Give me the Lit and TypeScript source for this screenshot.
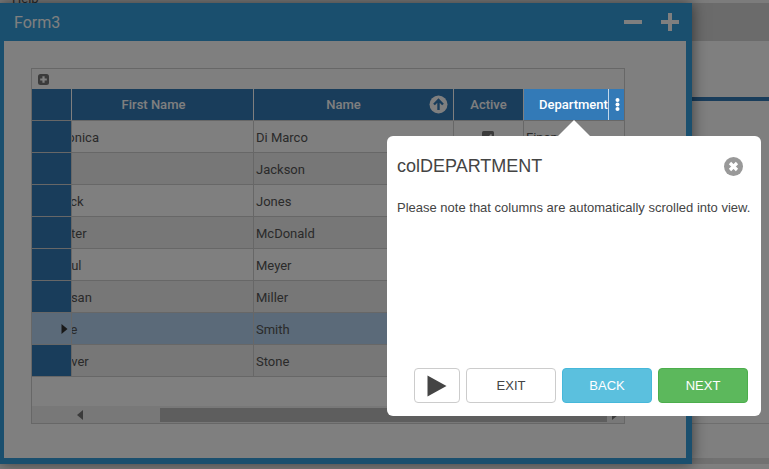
import {LitElement, html, css} from 'lit';
import {customElement} from 'lit/decorators.js';

interface IRow {
    first: string;
    name: string;
    department: string;
    selected?: boolean;
}

const ROWS: IRow[] = [
    {first: 'Monica', name: 'Di Marco', department: 'Finance'},
    {first: 'Al', name: 'Jackson', department: 'Sales'},
    {first: 'Jack', name: 'Jones', department: 'Sales'},
    {first: 'Peter', name: 'McDonald', department: 'Finance'},
    {first: 'Paul', name: 'Meyer', department: 'Support'},
    {first: 'Susan', name: 'Miller', department: 'Support'},
    {first: 'Joe', name: 'Smith', department: 'Sales', selected: true},
    {first: 'Oliver', name: 'Stone', department: 'Finance'},
];

@customElement('data-grid')
export class DataGrid extends LitElement {
    static override styles = css`
        :host {
            display: flex;
            flex-direction: column;
            width: 594px;
            height: 356px;
            box-sizing: border-box;
            border: 1px solid #cfcfcf;
            background: #fff;
            font-family: Roboto, "Liberation Sans", sans-serif;
            font-size: 13px;
            color: #555;
        }
        .toolbar {
            height: 20px;
            display: flex;
            align-items: center;
            padding-left: 6px;
            flex: none;
        }
        .row {
            display: grid;
            grid-template-columns: 39px 182px 200px 70px 101px;
            flex: none;
        }
        .head {
            height: 32px;
            background: #337ab7;
            color: #fff;
            font-weight: 500;
        }
        .head > div {
            display: flex;
            align-items: center;
            justify-content: center;
            box-sizing: border-box;
            border-left: 1px solid #fff;
            border-bottom: 1px solid #cfcfcf;
            height: 32px;
            position: relative;
        }
        .head > div:first-child {
            border-left: 0;
        }
        .head > .col-first {
            padding-right: 18px;
        }
        .head > .col-name {
            padding-right: 20px;
        }
        .sort {
            position: absolute;
            right: 5px;
            top: 6px;
        }
        .body-row {
            height: 32px;
        }
        .body-row:nth-child(even) {
            background: #eeeeee;
        }
        .body-row > div {
            box-sizing: border-box;
            height: 32px;
            line-height: 33px;
            border-left: 1px solid #cfcfcf;
            border-bottom: 1px solid #cfcfcf;
            padding-left: 2px;
            overflow: hidden;
            white-space: nowrap;
        }
        .body-row > .indicator {
            background: #337ab7;
            border-left: 0;
            padding: 0 3px 0 0;
            display: flex;
            align-items: center;
            justify-content: flex-end;
        }
        .body-row > .first {
            padding-left: 0;
            text-indent: -16px;
        }
        .body-row > .active {
            display: flex;
            justify-content: center;
            padding: 10px 1px 0 0;
        }
        .body-row.selected,
        .body-row.selected > .indicator {
            background: #b6d4f2;
        }
        .spacer {
            flex: 1;
        }
        .scroll {
            height: 17px;
            flex: none;
            background: #f1f1f1;
            display: flex;
            align-items: center;
            padding: 0 6px 0 45px;
        }
        .thumb {
            height: 14px;
            flex: 1;
            margin-left: 77px;
            margin-right: 5px;
            background: #bdbdbd;
        }
    `;

    override render() {
        return html`
            <div class="toolbar">
                <svg width="11" height="11" viewBox="0 0 11 11">
                    <rect width="11" height="11" rx="2.5" fill="#777"></rect>
                    <path d="M5.5 2.2v6.6M2.2 5.5h6.6" stroke="#fff" stroke-width="2.2"></path>
                </svg>
            </div>
            <div class="row head">
                <div></div>
                <div class="col-first">First Name</div>
                <div class="col-name">
                    Name
                    <svg class="sort" width="19" height="19" viewBox="0 0 19 19">
                        <circle cx="9.5" cy="9.5" r="9" fill="#fff"></circle>
                        <path d="M9.5 15V5M5 9.5l4.5-4.5 4.5 4.5" fill="none" stroke="#337ab7" stroke-width="2.4"></path>
                    </svg>
                </div>
                <div>Active</div>
                <div></div>
            </div>
            ${ROWS.map((r) => html`
                <div class="row body-row ${r.selected ? 'selected' : ''}">
                    <div class="indicator">
                        ${r.selected ? html`
                            <svg width="7" height="10" viewBox="0 0 7 10"><path d="M0.5 0L6.5 5L0.5 10Z" fill="#333"></path></svg>
                        ` : ''}
                    </div>
                    <div class="first">${r.first}</div>
                    <div>${r.name}</div>
                    <div class="active">
                        <svg width="12" height="12" viewBox="0 0 12 12">
                            <rect width="12" height="12" rx="1.5" fill="#777"></rect>
                            <path d="M2.5 6l2.5 2.5L9.5 3.5" fill="none" stroke="#fff" stroke-width="1.8"></path>
                        </svg>
                    </div>
                    <div>${r.department}</div>
                </div>
            `)}
            <div class="spacer"></div>
            <div class="scroll">
                <svg width="6" height="10" viewBox="0 0 6 10"><path d="M6 0L0 5L6 10Z" fill="#777"></path></svg>
                <div class="thumb"></div>
                <svg width="6" height="10" viewBox="0 0 6 10"><path d="M0 0L6 5L0 10Z" fill="#777"></path></svg>
            </div>
        `;
    }
}

@customElement('tour-popover')
export class TourPopover extends LitElement {
    static override styles = css`
        :host {
            display: flex;
            flex-direction: column;
            box-sizing: border-box;
            width: 374px;
            height: 280px;
            padding: 0 13px 13px 10px;
            background: #fff;
            border-radius: 6px;
            font-family: "Liberation Sans", Arial, sans-serif;
            color: #444;
        }
        .arrow {
            position: absolute;
            left: 171px;
            top: -16px;
            width: 0;
            height: 0;
            border-left: 16px solid transparent;
            border-right: 16px solid transparent;
            border-bottom: 16px solid #fff;
        }
        header {
            display: flex;
            align-items: center;
            justify-content: space-between;
            height: 61px;
            font-size: 18px;
            color: #444;
            padding-right: 5px;
        }
        p {
            margin: 0;
            font-size: 13px;
            line-height: 22px;
            white-space: nowrap;
            flex: 1;
        }
        .buttons {
            display: flex;
            justify-content: flex-end;
            gap: 6px;
        }
        button {
            box-sizing: border-box;
            width: 90px;
            height: 35px;
            padding: 0;
            border: 1px solid #ccc;
            border-radius: 4px;
            background: #fff;
            color: #444;
            font: 13px "Liberation Sans", Arial, sans-serif;
            display: flex;
            align-items: center;
            justify-content: center;
        }
        button.play {
            width: 46px;
        }
        button.back {
            background: #5bc0de;
            border-color: #46b8da;
            color: #fff;
        }
        button.next {
            background: #5cb85c;
            border-color: #4cae4c;
            color: #fff;
        }
    `;

    override render() {
        return html`
            <div class="arrow"></div>
            <header>
                <span>colDEPARTMENT</span>
                <svg width="19" height="19" viewBox="0 0 19 19">
                    <circle cx="9.5" cy="9.5" r="9.5" fill="#999"></circle>
                    <path d="M6 6l7 7M13 6l-7 7" stroke="#fff" stroke-width="3.2"></path>
                </svg>
            </header>
            <p>Please note that columns are automatically scrolled into view.</p>
            <div class="buttons">
                <button class="play">
                    <svg width="20" height="22" viewBox="0 0 20 22"><path d="M0.5 0.5L19.5 11L0.5 21.5Z" fill="#444"></path></svg>
                </button>
                <button>EXIT</button>
                <button class="back">BACK</button>
                <button class="next">NEXT</button>
            </div>
        `;
    }
}

@customElement('app-root')
export class AppRoot extends LitElement {
    static override styles = css`
        :host {
            display: block;
            position: relative;
            width: 769px;
            height: 469px;
            overflow: hidden;
            background: #fff;
            font-family: Roboto, "Liberation Sans", sans-serif;
        }
        .page {
            display: flex;
            flex-direction: column;
            height: 100%;
        }
        .menu {
            height: 3px;
            flex: none;
            background: #f8f8f8;
            font-size: 13px;
            color: #555;
            padding-left: 12px;
            line-height: 6px;
            overflow: hidden;
        }
        .menu span {
            position: relative;
            top: -4px;
        }
        .bar {
            height: 38px;
            flex: none;
            background: #d6d6d6;
        }
        .gap {
            height: 56px;
            flex: none;
        }
        .rule {
            height: 4px;
            flex: none;
            background: #337ab7;
        }
        .rest {
            flex: 1;
            border-bottom: 1px solid #ddd;
            margin-bottom: 45px;
        }
        .foot {
            position: absolute;
            left: 0;
            right: 0;
            top: 458px;
            height: 6px;
            background: #e2e2e2;
        }
        .window {
            position: absolute;
            left: 0;
            top: 3px;
            width: 692px;
            height: 461px;
            box-sizing: border-box;
            display: flex;
            flex-direction: column;
            padding: 0 6px 6px 4px;
            background: #349fdc;
            box-shadow: 0 0 14px rgba(0, 0, 0, 0.55);
        }
        .title {
            height: 38px;
            flex: none;
            display: flex;
            align-items: center;
            justify-content: space-between;
            padding: 0 7px 0 10px;
            color: #fff;
            font-size: 16px;
        }
        .title-icons {
            display: flex;
            gap: 19px;
        }
        .content {
            flex: 1;
            background: #fff;
            padding: 27px 0 0 27px;
        }
        .overlay {
            position: absolute;
            inset: 0;
            background: rgba(0, 0, 0, 0.5);
        }
        .highlight {
            position: absolute;
            left: 524px;
            top: 89px;
            width: 100px;
            height: 31px;
            box-sizing: border-box;
            display: flex;
            align-items: center;
            justify-content: space-between;
            background: #337ab7;
            color: #fff;
            font-size: 13px;
            font-weight: 500;
            padding-left: 15px;
        }
        .menu-handle {
            width: 18px;
            flex: none;
            height: 31px;
            border-left: 1px solid rgba(255, 255, 255, 0.7);
            box-sizing: border-box;
            display: flex;
            align-items: center;
            justify-content: center;
        }
        tour-popover {
            position: absolute;
            left: 387px;
            top: 136px;
        }
    `;

    override render() {
        return html`
            <div class="page">
                <div class="menu"><span>Help</span></div>
                <div class="bar"></div>
                <div class="gap"></div>
                <div class="rule"></div>
                <div class="rest"></div>
            </div>
            <div class="foot"></div>
            <div class="window">
                <div class="title">
                    <span>Form3</span>
                    <div class="title-icons">
                        <svg width="18" height="18" viewBox="0 0 18 18"><path d="M0 9h18" stroke="#fff" stroke-width="4"></path></svg>
                        <svg width="18" height="18" viewBox="0 0 18 18"><path d="M0 9h18M9 0v18" stroke="#fff" stroke-width="4"></path></svg>
                    </div>
                </div>
                <div class="content">
                    <data-grid></data-grid>
                </div>
            </div>
            <div class="overlay"></div>
            <div class="highlight">
                <span>Department</span>
                <div class="menu-handle">
                    <svg width="5" height="13" viewBox="0 0 5 13" fill="#fff">
                        <circle cx="2.5" cy="2" r="2"></circle>
                        <circle cx="2.5" cy="6.5" r="2"></circle>
                        <circle cx="2.5" cy="11" r="2"></circle>
                    </svg>
                </div>
            </div>
            <tour-popover></tour-popover>
        `;
    }
}

declare global {
    interface HTMLElementTagNameMap {
        'app-root': AppRoot;
        'data-grid': DataGrid;
        'tour-popover': TourPopover;
    }
}
